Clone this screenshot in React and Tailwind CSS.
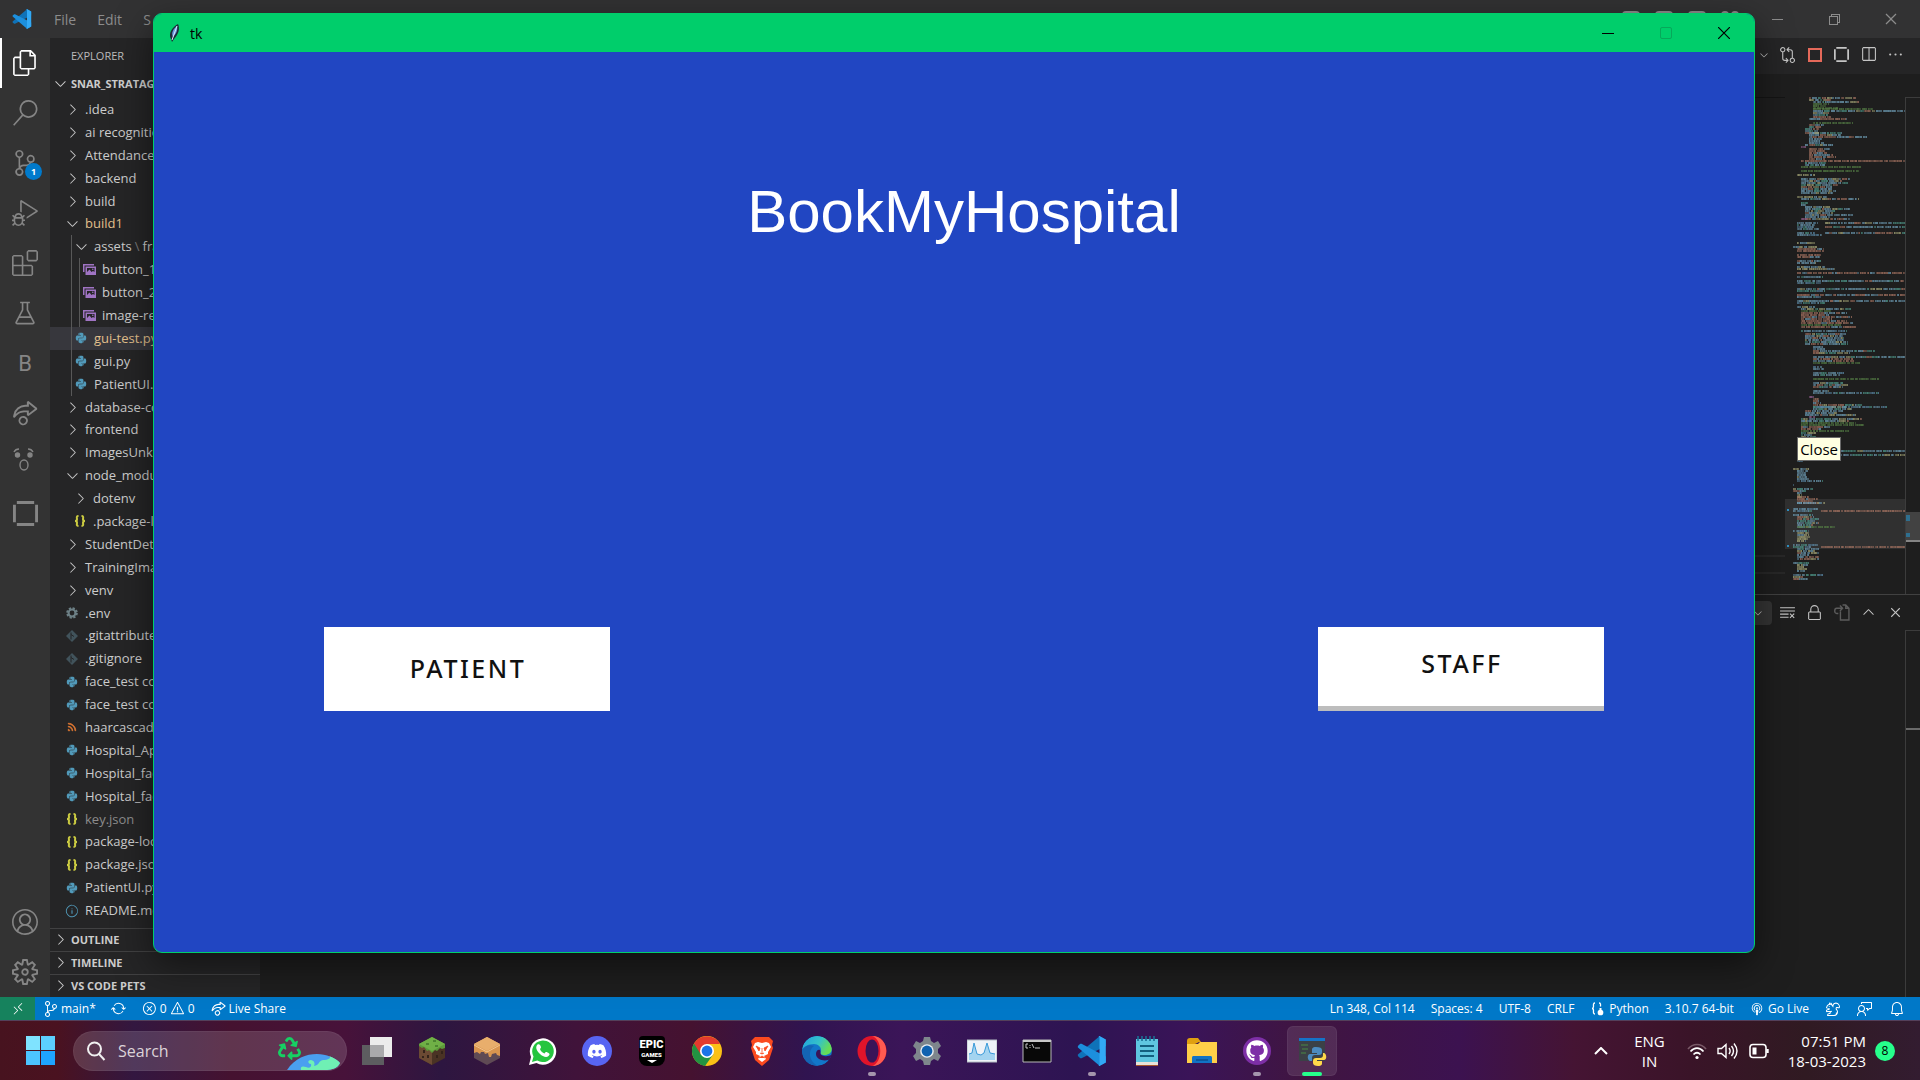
import React from "react";
import {
  VscFiles, VscSearch, VscSourceControl, VscDebugAlt, VscExtensions, VscBeaker, VscLiveShare,
  VscAccount, VscSettingsGear, VscChevronRight, VscChevronDown, VscChevronUp, VscGitCompare,
  VscSplitHorizontal, VscEllipsis, VscClearAll, VscLock, VscSync, VscError, VscWarning,
  VscBroadcast, VscFeedback, VscBell, VscRemote, VscChromeMinimize, VscChromeRestore,
  VscChromeClose, VscClose, VscRss, VscInfo, VscSquirrel,
} from "react-icons/vsc";
import { FaPython, FaDiscord, FaGithub, FaRecycle } from "react-icons/fa";

/* ---------- brand drawings ---------- */

function VsCodeLogo({ className }) {
  return (
    <svg viewBox="0 0 100 100" className={className} aria-hidden="true">
      <path d="M75 1 96 12v21L15 74h-4L3 67v-5z" fill="#0f72b8" />
      <path d="M3 38v-5l8-7h4l81 42v20L75 99z" fill="#1c8fdd" />
      <path d="M71 1 75 0l21 12v76L75 100l-4-1c3-1 4-3 4-6V7c0-3-1-5-4-6z" fill="#32a9f5" />
    </svg>
  );
}

function Feather() {
  return (
    <svg viewBox="0 0 16 20" className="h-5 w-4" aria-hidden="true">
      <path d="M12 1c2 4 1 10-4 15l-2 3-1-3C2 11 6 4 12 1z" fill="#1d2b3a" />
      <path d="M11 3c1 4-1 8-4 11C5 10 7 6 11 3z" fill="#6d9be0" />
      <path d="M11 3 6 17" stroke="#dbe8ff" strokeWidth="1" />
    </svg>
  );
}

function BracketSquare({ className }) {
  return (
    <svg viewBox="0 0 26 26" className={className} fill="currentColor" aria-hidden="true">
      <path d="M4 0h18v3H4zM4 23h18v3H4zM0 4h3v18H0zM23 4h3v18h-3z" />
    </svg>
  );
}

function PetsFace() {
  return (
    <svg viewBox="0 0 24 26" className="h-[26px] w-6" fill="none" stroke="currentColor" strokeWidth="1.4" aria-hidden="true">
      <path d="M1 5c1-2 3-3 5-3M15 2c3 0 4 1 5 3" />
      <circle cx="4.500" cy="8" r="2" fill="currentColor" />
      <circle cx="17" cy="8" r="2" fill="currentColor" />
      <ellipse cx="11" cy="18" rx="4" ry="5" />
    </svg>
  );
}

function ImageFileIcon() {
  return (
    <svg viewBox="0 0 13 11" className="h-[11px] w-[13px]" aria-hidden="true">
      <path d="M0 8V0h11v1.500H1.500V8z" fill="#a074c4" />
      <path d="M2.500 2.500H13V11H2.500z" fill="#a074c4" />
      <path d="M4 8V4h7.500v4L10 7 8.500 8 6.500 5.500z" fill="#252526" />
      <circle cx="9.800" cy="5.300" r=".8" fill="#a074c4" />
    </svg>
  );
}

function GitFileIcon() {
  return (
    <svg viewBox="0 0 12 12" className="h-3 w-3" aria-hidden="true">
      <path d="M6 0l6 6-6 6-6-6z" fill="#41535b" />
      <path d="M5 2.500v7M5 4.500l3 2" stroke="#252526" strokeWidth="1" fill="none" />
    </svg>
  );
}

function CogFileIcon() {
  return (
    <svg viewBox="0 0 14 14" className="size-3" aria-hidden="true">
      <circle cx="7" cy="7" r="5.600" fill="none" stroke="#6d8086" strokeWidth="2.400" strokeDasharray="2.600 1.800" />
      <circle cx="7" cy="7" r="4" fill="none" stroke="#6d8086" strokeWidth="2.400" />
    </svg>
  );
}

function BracesIcon() {
  return (
    <svg viewBox="0 0 12 12" className="size-3" fill="none" stroke="#cbcb41" strokeWidth="2" aria-hidden="true">
      <path d="M4.500 1C2 1 3 3 3 4.300S2.500 6 1 6c1.500 0 2 .5 2 1.700S2 11 4.500 11M7.500 1C10 1 9 3 9 4.300S9.500 6 11 6c-1.500 0-2 .5-2 1.700s1 3.300-1.500 3.300" />
    </svg>
  );
}

const icons = {
  py: <FaPython className="size-3 text-[#519aba]" />,
  img: <ImageFileIcon />,
  json: <BracesIcon />,
  git: <GitFileIcon />,
  env: <CogFileIcon />,
  xml: <VscRss className="size-3 text-[#e37933]" strokeWidth="1" />,
  md: <VscInfo className="size-[14px] text-[#519aba]" />,
  open: <VscChevronDown className="size-[17px] text-[#c5c5c5]" />,
  closed: <VscChevronRight className="size-[17px] text-[#c5c5c5]" />,
};

const tree = [
  ["closed", ".idea", 0],
  ["closed", "ai recognition", 0],
  ["closed", "Attendance", 0],
  ["closed", "backend", 0],
  ["closed", "build", 0],
  ["open", "build1", 0, "text-[#e2c08d]"],
  ["open", <>assets<span className="px-[3px] text-[#7a7a7a]">\</span>frame0</>, 1],
  ["img", "button_1.png", 2],
  ["img", "button_2.png", 2],
  ["img", "image-re.png", 2],
  ["py", "gui-test.py", 1, "text-[#e2c08d]"],
  ["py", "gui.py", 1],
  ["py", "PatientUI.py", 1],
  ["closed", "database-con", 0],
  ["closed", "frontend", 0],
  ["closed", "ImagesUnknown", 0],
  ["open", "node_modules", 0],
  ["closed", "dotenv", 3],
  ["json", ".package-lock.json", 3],
  ["closed", "StudentDetails", 0],
  ["closed", "TrainingImage", 0],
  ["closed", "venv", 0],
  ["env", ".env", 0],
  ["git", ".gitattributes", 0],
  ["git", ".gitignore", 0],
  ["py", "face_test copy.py", 0],
  ["py", "face_test copy 2.py", 0],
  ["xml", "haarcascade.xml", 0],
  ["py", "Hospital_App.py", 0],
  ["py", "Hospital_face.py", 0],
  ["py", "Hospital_face2.py", 0],
  ["json", "key.json", 0, "text-[#8c8c8c]"],
  ["json", "package-lock.json", 0],
  ["json", "package.json", 0],
  ["py", "PatientUI.py", 0],
  ["md", "README.md", 0],
  ["py", "", 0],
];

function TreeRow({ row }) {
  const [kind, name, level, color] = row;
  const active = name === "gui-test.py";
  return (
    <li className={"flex min-h-0 flex-1 items-stretch pl-[13px] " + (active ? "bg-[#37373d]" : "")}>
      {(level === 1 || level === 2) && <span className="ml-2 w-0 border-l border-[#585858]" />}
      {level === 2 && <span className="ml-[7px] w-0 border-l border-[#585858]" />}
      {level === 3 && <span className="w-2" />}
      <button type="button" className="flex items-center gap-1 whitespace-nowrap">
        <span className="flex w-[18px] justify-center">{icons[kind]}</span>
        <span className={color || "text-[#cccccc]"}>{name}</span>
      </button>
    </li>
  );
}

/* ---------- minimap ---------- */

const palettes = {
  m: ["#6f9fb8", "#6f9fb8", "#4f9a8c", "#a8a878", "#6f9fb8", "#a87462"],
  o: ["#a87462", "#a87462", "#6f9fb8", "#a87462"],
  s: ["#a87462"],
  g: ["#557f45"],
  p: ["#96608f"],
  y: ["#a8a878", "#6f9fb8", "#a8a878"],
  b: ["#6f9fb8", "#5a89a8", "#6f9fb8", "#4f9a8c"],
};

// [y, line count, indent, width, palette]
const codeBlocks = [
  [0, 1, 24, 48, "m"], [2, 1, 24, 22, "m"], [4, 1, 28, 46, "m"], [6, 3, 28, 26, "g"], [11, 1, 28, 60, "g"], [13, 1, 28, 92, "m"],
  [15, 3, 28, 22, "m"], [21, 1, 24, 38, "o"], [25, 1, 28, 40, "g"], [27, 2, 24, 18, "m"], [31, 3, 20, 24, "m"],
  [35, 2, 24, 34, "m"], [39, 1, 24, 58, "o"], [41, 3, 24, 22, "b"], [47, 1, 20, 28, "m"], [49, 1, 16, 5, "p"],
  [51, 6, 24, 30, "o"], [63, 1, 16, 104, "s"], [65, 2, 20, 24, "b"], [69, 1, 16, 60, "g"], [73, 1, 16, 58, "g"],
  [77, 1, 12, 18, "y"], [81, 8, 16, 54, "m"], [99, 1, 12, 30, "y"], [101, 1, 16, 58, "m"], [105, 2, 16, 8, "b"],
  [109, 7, 20, 50, "m"], [121, 1, 16, 6, "p"], [125, 4, 12, 28, "b"], [125, 1, 40, 80, "m"], [129, 1, 40, 80, "m"],
  [135, 2, 12, 30, "b"], [135, 1, 40, 80, "m"], [145, 1, 12, 18, "y"], [149, 1, 8, 24, "y"], [151, 2, 12, 30, "o"],
  [157, 2, 12, 28, "o"], [163, 2, 12, 38, "m"], [169, 2, 12, 40, "y"], [175, 1, 12, 108, "o"], [179, 1, 12, 26, "b"],
  [183, 1, 12, 108, "m"], [185, 1, 12, 24, "b"], [191, 1, 12, 108, "m"], [193, 1, 12, 28, "b"], [197, 1, 12, 108, "o"],
  [199, 1, 12, 24, "b"], [203, 1, 12, 108, "m"], [205, 1, 12, 28, "b"], [209, 1, 12, 18, "y"], [211, 1, 16, 50, "m"],
  [213, 1, 16, 30, "g"], [215, 6, 16, 54, "o"], [227, 1, 16, 40, "g"], [229, 1, 16, 56, "o"], [233, 1, 16, 46, "b"],
  [236, 6, 20, 50, "m"], [249, 2, 28, 16, "b"], [253, 2, 28, 66, "m"], [259, 1, 28, 92, "m"], [261, 2, 28, 50, "o"],
  [265, 1, 28, 48, "g"], [269, 2, 28, 18, "b"], [275, 2, 28, 36, "b"], [281, 1, 28, 66, "g"], [285, 3, 28, 46, "m"],
  [293, 1, 28, 16, "y"], [295, 1, 28, 66, "b"], [299, 1, 24, 5, "p"], [301, 3, 28, 12, "o"], [307, 3, 28, 50, "m"],
  [309, 1, 28, 74, "b"], [313, 3, 20, 62, "m"], [319, 1, 24, 6, "p"], [321, 2, 16, 62, "m"], [325, 2, 16, 66, "g"],
  [329, 2, 16, 40, "o"], [333, 1, 16, 48, "g"], [335, 3, 16, 22, "m"], [353, 1, 12, 108, "m"], [357, 1, 12, 108, "m"],
  [363, 1, 12, 6, "b"], [371, 1, 8, 16, "y"], [373, 5, 12, 16, "m"], [383, 1, 12, 26, "b"], [387, 1, 8, 1, "b"],
  [391, 2, 8, 26, "m"], [395, 3, 12, 7, "y"], [399, 4, 12, 22, "o"], [405, 1, 12, 28, "m"], [411, 2, 8, 28, "b"],
  [413, 1, 36, 84, "s"], [417, 1, 8, 20, "b"], [419, 6, 12, 22, "m"], [429, 1, 12, 38, "g"], [433, 1, 8, 16, "b"],
  [435, 5, 12, 13, "y"], [447, 2, 8, 28, "b"], [449, 1, 36, 84, "s"], [451, 6, 12, 24, "m"], [465, 1, 8, 16, "b"],
  [467, 4, 12, 13, "y"], [477, 1, 8, 30, "b"], [479, 2, 8, 18, "m"],
];

function buildSegments() {
  let seed = 7;
  const rnd = () => {
    seed = (seed * 16807) % 2147483647;
    return seed / 2147483647;
  };
  const out = [];
  codeBlocks.forEach(([y, n, x, w, p]) => {
    for (let i = 0; i < n; i++) {
      const end = x + Math.round(n === 1 ? w : w * (0.5 + 0.5 * rnd()));
      let cx = x;
      while (cx < end) {
        const len = Math.min(2 + Math.floor(rnd() * 6), end - cx);
        const colors = palettes[p];
        const color = colors[Math.floor(rnd() * colors.length)];
        for (let k = 0; k < len; k++) {
          out.push([cx + k, y + i * 2, 1, color, 0.4 + rnd() * 0.35]);
        }
        cx += len + (rnd() > 0.4 ? 1 : 0);
      }
    }
  });
  return out;
}
const segments = buildSegments();

function Minimap() {
  return (
    <svg viewBox="0 0 120 498" className="h-[498px] w-[120px] shrink-0" shapeRendering="crispEdges" aria-hidden="true">
      <rect x="0" y="402" width="120" height="50" fill="#303030" />
      {segments.map(([x, y, w, c, o], i) => (
        <rect key={i} x={x} y={y} width={w} height="2" fill={c} opacity={o} />
      ))}
      <rect x="2" y="412" width="2" height="2" fill="#2f8fc0" />
      <rect x="2" y="448" width="2" height="2" fill="#2f8fc0" />
    </svg>
  );
}

/* ---------- VS Code ---------- */

function ActivityBar() {
  const item = "flex h-[50px] w-full items-center justify-center";
  return (
    <nav aria-label="Activity bar" className="flex w-[50px] shrink-0 flex-col bg-[#333333] text-[#858585]">
      <button type="button" aria-label="Explorer" className={item + " border-l-2 border-white pr-[2px] text-white"}><VscFiles className="size-[26px]" /></button>
      <button type="button" aria-label="Search" className={item}><VscSearch className="size-[26px]" /></button>
      <button type="button" aria-label="Source control" className={item + " relative"}>
        <VscSourceControl className="size-[26px]" />
        <span className="absolute right-2 bottom-2 flex size-[17px] items-center justify-center rounded-full bg-[#007acc] text-[9px] font-bold text-white">1</span>
      </button>
      <button type="button" aria-label="Run and debug" className={item}><VscDebugAlt className="size-[26px]" /></button>
      <button type="button" aria-label="Extensions" className={item}><VscExtensions className="size-[26px]" /></button>
      <button type="button" aria-label="Testing" className={item}><VscBeaker className="size-[26px]" /></button>
      <button type="button" className={item + " font-['Roboto'] text-[22px]"}>B</button>
      <button type="button" aria-label="Live share" className={item}><VscLiveShare className="size-[26px]" /></button>
      <button type="button" aria-label="Pets" className={item + " pb-[6px]"}><PetsFace /></button>
      <button type="button" aria-label="Frames" className={item}><BracketSquare className="size-[25px]" /></button>
      <button type="button" aria-label="Account" className={item + " mt-auto"}><VscAccount className="size-[26px]" /></button>
      <button type="button" aria-label="Settings" className={item}><VscSettingsGear className="size-[26px]" /></button>
    </nav>
  );
}

function SideBar() {
  return (
    <aside className="flex w-[210px] shrink-0 flex-col overflow-hidden bg-[#252526] text-[13px] leading-none text-[#cccccc]">
      <h2 className="flex h-[34px] shrink-0 items-center pl-[21px] text-[11px] text-[#bbbbbb]">EXPLORER</h2>
      <button type="button" className="mb-1 flex h-[22px] shrink-0 items-center gap-[2px] pl-[2px] text-[11px] font-bold whitespace-nowrap">
        <VscChevronDown className="size-[17px]" />SNAR_STRATAGEM
      </button>
      <div className="min-h-0 flex-1 overflow-hidden">
        <ul className="flex h-[847px] flex-col">
          {tree.map((row, i) => <TreeRow key={i} row={row} />)}
        </ul>
      </div>
      {["OUTLINE", "TIMELINE", "VS CODE PETS"].map((t) => (
        <button key={t} type="button" className="flex h-[23px] shrink-0 items-center gap-[2px] border-t border-[#414142] pb-[2px] pl-[2px] text-[11px] font-bold">
          <VscChevronRight className="size-[17px]" />{t}
        </button>
      ))}
    </aside>
  );
}

function Editor() {
  const act = "flex w-[27px] items-center justify-center";
  return (
    <main className="flex min-w-0 flex-1 flex-col bg-[#1e1e1e] text-[#c5c5c5]">
      <div className="flex h-9 shrink-0 items-center justify-end bg-[#252526] pr-[11px] pb-[3px]">
        <button type="button" aria-label="Run menu" className="flex w-5 justify-center"><VscChevronDown className="size-3" /></button>
        <button type="button" aria-label="Compare" className={act}><VscGitCompare className="size-[17px]" /></button>
        <button type="button" aria-label="Stop" className={act}><span className="size-[14px] border-2 border-[#e5695a]" /></button>
        <button type="button" aria-label="Frame" className={act}><BracketSquare className="size-[15px]" /></button>
        <button type="button" aria-label="Split editor" className={act}><VscSplitHorizontal className="size-[17px]" /></button>
        <button type="button" aria-label="More" className={act}><VscEllipsis className="size-[17px]" /></button>
      </div>
      <div className="h-[23px] shrink-0" />
      <div className="flex min-h-0 flex-1">
        <div className="flex min-w-0 flex-1 flex-col border-t border-[#141414]">
          <div className="mt-[457px] h-[19px] border-y-2 border-[#282828]" />
        </div>
        <Minimap />
        <div className="flex w-[15px] flex-col border-t border-l border-[#3c3c3c]">
          <div className="mt-[414px] flex h-[30px] flex-col justify-between border-b-2 border-[#858585] bg-[#424242] py-[3px]">
            <span className="h-[6px] w-1 bg-[#2f6f8f]" />
            <span className="h-1 w-1 bg-[#2f6f8f]" />
          </div>
        </div>
      </div>
      <section aria-label="Panel" className="flex h-[403px] shrink-0 flex-col border-t border-[#414141]">
        <div className="flex h-[35px] items-center justify-end pr-[11px]">
          <button type="button" aria-label="Profile menu" className="mr-[2px] flex h-6 w-7 items-center justify-center rounded-sm bg-[#343434]"><VscChevronDown className="size-3" /></button>
          <button type="button" aria-label="Clear" className={act}><VscClearAll className="size-[17px]" /></button>
          <button type="button" aria-label="Lock" className={act}><VscLock className="size-[17px]" /></button>
          <button type="button" aria-label="Open log" className={act + " text-[#5c5c5c]"}>
            <svg viewBox="0 0 16 16" className="size-[17px]" fill="none" stroke="currentColor" strokeWidth="1.300" aria-hidden="true">
              <path d="M7 7v8h8V4l-3-3H9M5 9H3.500C1 9 1 4 3.500 4H9M6.500 1.500 9 4 6.500 6.500M12 1v3h3" />
            </svg>
          </button>
          <button type="button" aria-label="Maximize panel" className={act}><VscChevronUp className="size-[17px]" /></button>
          <button type="button" aria-label="Close panel" className={act}><VscClose className="size-[17px]" /></button>
        </div>
        <div className="flex flex-1 justify-end">
          <div className="w-[15px] border-t border-l border-[#3c3c3c]"><div className="mt-[97px] h-[2px] bg-[#6a6a6a]" /></div>
        </div>
      </section>
    </main>
  );
}

function StatusBar() {
  const b = "flex items-center";
  return (
    <footer className="flex h-[23px] shrink-0 items-center bg-[#0078c8] text-[12px] whitespace-nowrap text-white">
      <button type="button" aria-label="Remote" className="flex h-full w-[35px] items-center justify-center bg-[#16825d]"><VscRemote className="size-[14px]" /></button>
      <button type="button" className={b + " ml-2 gap-[2px]"}><VscSourceControl className="size-4" />main*</button>
      <button type="button" aria-label="Sync" className="ml-[15px]"><VscSync className="size-[15px]" /></button>
      <button type="button" className={b + " ml-4 gap-[3px]"}><VscError className="size-[15px]" />0<VscWarning className="size-[15px]" />0</button>
      <button type="button" className={b + " ml-4 gap-[3px]"}><VscLiveShare className="size-[15px]" />Live Share</button>
      <div className="ml-auto flex items-center gap-4 pr-[15px]">
        <button type="button">Ln 348, Col 114</button>
        <button type="button">Spaces: 4</button>
        <button type="button">UTF-8</button>
        <button type="button">CRLF</button>
        <button type="button" className={b + " gap-[5px]"}>
          <svg viewBox="0 0 14 14" className="size-[14px]" fill="none" stroke="currentColor" strokeWidth="1.300" aria-hidden="true">
            <path d="M5 1C3 1 3.500 3 3.500 4.500S3 6.500 2 6.500c1 0 1.500.5 1.500 2S3 12 5 12M9 1c2 0 1.500 2 1.500 3.500" />
            <circle cx="10.500" cy="10.500" r="2.200" fill="currentColor" /><path d="M10.500 6v4" strokeWidth="2" />
          </svg>
          Python
        </button>
        <button type="button">3.10.7 64-bit</button>
        <button type="button" className={b + " gap-1"}><VscBroadcast className="size-[14px]" />Go Live</button>
        <button type="button" aria-label="Squirrel"><VscSquirrel className="size-4" /></button>
        <button type="button" aria-label="Feedback"><VscFeedback className="size-4" /></button>
        <button type="button" aria-label="Notifications"><VscBell className="size-4" /></button>
      </div>
    </footer>
  );
}

function CodeWindow() {
  return (
    <div className="flex min-h-0 flex-1 flex-col">
      <header className="flex h-[38px] shrink-0 items-center bg-[#323233] text-[14px] text-[#8c8c8c]">
        <VsCodeLogo className="ml-3 size-5" />
        <nav aria-label="Menu" className="ml-[22px] flex gap-[21px]">
          <button type="button">File</button>
          <button type="button">Edit</button>
          <button type="button" aria-label="Selection" className="w-2 overflow-hidden">S</button>
        </nav>
        <div className="mr-[9px] ml-auto flex gap-[15px]" aria-hidden="true">
          <span className="h-4 w-[18px] rounded-sm border-2 border-l-[7px] border-[#8c8c8c]" />
          <span className="h-4 w-[18px] rounded-sm border-2 border-[#8c8c8c]" />
          <span className="h-4 w-[18px] rounded-sm border-2 border-r-[7px] border-[#8c8c8c]" />
          <span className="flex w-[18px] gap-[2px]"><i className="h-4 flex-1 rounded-sm border-2 border-[#8c8c8c]" /><i className="h-4 flex-1 rounded-sm border-2 border-[#8c8c8c]" /></span>
        </div>
        <div className="flex pr-px">
          <button type="button" aria-label="Minimize" className="flex w-[57px] justify-center"><VscChromeMinimize className="size-4" /></button>
          <button type="button" aria-label="Restore" className="flex w-[57px] justify-center"><VscChromeRestore className="size-4" /></button>
          <button type="button" aria-label="Close" className="flex w-[57px] justify-center"><VscChromeClose className="size-4" /></button>
        </div>
      </header>
      <div className="flex min-h-0 flex-1">
        <ActivityBar />
        <SideBar />
        <Editor />
      </div>
      <StatusBar />
    </div>
  );
}

/* ---------- tk window ---------- */

function TkWindow() {
  return (
    <section aria-label="tk" className="absolute top-[13px] right-[165px] bottom-[127px] left-[153px] flex flex-col overflow-hidden rounded-[9px] border border-[#00ce6b] bg-[#2146c2] shadow-[0_12px_36px_rgba(0,0,0,0.5)]">
      <header className="flex h-[38px] shrink-0 items-center bg-[#00ce6b] pr-px text-[14px] text-black">
        <span className="ml-3"><Feather /></span>
        <span className="ml-2">tk</span>
        <button type="button" aria-label="Minimize" className="ml-auto flex h-full w-[58px] items-center justify-center"><span className="h-px w-3 bg-black" /></button>
        <button type="button" aria-label="Maximize" disabled className="flex h-full w-[58px] items-center justify-center"><span className="size-3 rounded-[2px] border border-[#07a85a]" /></button>
        <button type="button" aria-label="Close" className="flex h-full w-[58px] items-center justify-center">
          <svg viewBox="0 0 12 12" className="size-3" aria-hidden="true"><path d="M0 0l12 12M12 0 0 12" stroke="#000" strokeWidth="1.200" /></svg>
        </button>
      </header>
      <div className="flex flex-1 flex-col pt-[125px] pr-[150px] pl-[170px]">
        <h1 className="text-center font-['Liberation_Sans',sans-serif] text-[60px] leading-[70px] text-white">BookMyHospital</h1>
        <div className="mt-[380px] flex justify-between font-['Noto_Sans',sans-serif] text-[25px] font-medium tracking-widest text-[#111111]">
          <button type="button" className="h-[84px] w-[286px] bg-white pl-[2px]">PATIENT</button>
          <button type="button" className="h-[84px] w-[286px] border-b-[5px] border-[#bdbdbd] bg-white pb-[6px] pl-[2px]">STAFF</button>
        </div>
      </div>
    </section>
  );
}

/* ---------- taskbar ---------- */

const I = "size-[30px]";

const taskIcons = [
  ["Task view", <svg viewBox="0 0 30 30" className={I}><path d="M8 1h22v20H8z" fill="#ececec" /><path d="M0 9h22v20H0z" fill="#5d5d60" /><path d="M8 9h14v12H8z" fill="#a9a9ab" /></svg>],
  ["Minecraft", <svg viewBox="0 0 30 30" className={I}><path d="M15 1 28 8v14L15 29 2 22V8z" fill="#4a3324" /><path d="M15 15v14L2 22V8z" fill="#6b4a33" /><path d="M15 1 28 8v4l-3 1-2-1-3 3-2-1-3 3-3-3-2 1-3-4-2 1-3-2V8z" fill="#5c9a3a" /><path d="M15 1 28 8l-13 7L2 8z" fill="#6fb046" /><path d="M6 14h2v3H6zM10 19h2v3h-2zM5 20h2v2H5zM19 19h2v3h-2zM24 15h2v3h-2z" fill="#33231a" /><path d="M9 7h3v2H9zM16 4h3v2h-3zM18 9h3v2h-3z" fill="#4c8530" /></svg>],
  ["Dungeons", <svg viewBox="0 0 30 30" className={I}><path d="M15 1 28 8v14L15 29 2 22V8z" fill="#5f4a54" /><path d="M15 1 28 8v12l-3-1-1-2-4 1-1 3-2 0-1-4-3 1-1-2-3 0-1 2-3-2-3 1V8z" fill="#d9954f" /><path d="M15 1 28 8l-13 7L2 8z" fill="#e8ae6c" /><path d="M2 9l13 7 13-7" stroke="#f2c48d" fill="none" /></svg>],
  ["WhatsApp", <svg viewBox="0 0 30 30" className={I}><path d="M2 29l2-8A13.200 13.200 0 1 1 9.500 27z" fill="#fff" /><path d="M5 26l1.500-5.500A10.800 10.800 0 1 1 10.300 24.500z" fill="#25c53f" /><path d="M10.500 8.500c-3 3 0 7 2.500 9.500s6.500 4 8.500 2 1-2.500-1-3.500-2 0-3 1c-2-.5-4-2.500-4.500-4.500 1-1 1.200-1.500.7-2.800s-1.200-2.700-3.200-1.700z" fill="#fff" /></svg>],
  ["Discord", <span className="flex size-[30px] items-center justify-center rounded-full bg-[#5865f2]"><FaDiscord className="size-5 text-white" /></span>],
  ["Epic Games", <span className="flex h-[30px] w-[26px] flex-col items-center rounded-t-sm rounded-b-lg bg-black pt-[3px] font-['Roboto',sans-serif] font-black text-white"><b className="text-[11px] leading-[12px]">EPIC</b><b className="text-[6px] leading-[7px]">GAMES</b><svg viewBox="0 0 10 3" className="mt-[2px] h-[3px] w-[10px]"><path d="M0 0h10L5 3z" fill="#fff" /></svg></span>],
  ["Chrome", <svg viewBox="0 0 30 30" className={I}><circle cx="15" cy="15" r="15" fill="#fbc116" /><path d="M15 15 2 7.500A15 15 0 0 0 13 29.900L21.500 18z" fill="#229342" /><path d="M2 7.500A15 15 0 0 1 28 8H15L8.900 18.500z" fill="#e33b2e" /><circle cx="15" cy="15" r="7" fill="#fff" /><circle cx="15" cy="15" r="5.400" fill="#1a73e8" /></svg>],
  ["Brave", <svg viewBox="0 0 30 30" className={I}><path d="M8 1h14l4 4-1 4 1 3-4 12-7 6-7-6L4 12l1-3-1-4z" fill="#fb4a1f" /><path d="M8 7l3-1 4 1 4-1 3 1 2 4-3 5 0 2-4 2 2 3-4 3-4-3 2-3-4-2 0-2-3-5z" fill="#fff" /><path d="M9 10l4 2-1 3zM21 10l-4 2 1 3zM13 17l2 1 2-1M15 12v5M12 22l3-2 3 2" fill="#fb4a1f" stroke="#fb4a1f" strokeWidth=".8" /></svg>],
  ["Edge", <svg viewBox="0 0 30 30" className={I}><defs><linearGradient id="eg" x1="0" y1="0" x2="1" y2=".4"><stop offset="0" stopColor="#1f9fe0" /><stop offset=".6" stopColor="#35c2c8" /><stop offset="1" stopColor="#66dd55" /></linearGradient><clipPath id="ec"><circle cx="15" cy="15" r="15" /></clipPath></defs><g clipPath="url(#ec)"><circle cx="15" cy="15" r="15" fill="#1277c9" /><path d="M0 14C1 5 8 0 15 0c9 0 15 6 15 12 0 5-4 7-7 7-4 0-5-1-4-3 1-5-3-8-7-8C6 8 1 11 0 14z" fill="url(#eg)" /><path d="M12 10c-5 3-7 14 4 20C6 30 0 24 0 15c2-5 8-7 12-5z" fill="#1464b4" /><path d="M18 14c1 2-1 5 4 6 3 .5 6 0 9-2l-2 5c-6 3-15 1-15-5 0-3 2-5 4-4z" fill="#3a1458" /></g></svg>],
  ["Opera", <svg viewBox="0 0 30 30" className={I}><ellipse cx="15" cy="15" rx="14.500" ry="15" fill="#e0142a" /><path d="M15 0c19 0 19 30 0 30 11-3 11-27 0-30z" fill="#ff5b50" /><ellipse cx="15" cy="15" rx="6.500" ry="11.500" fill="#3a1458" /></svg>],
  ["Settings", <svg viewBox="0 0 30 30" className={I}><path d="M12 1h6l1 4 3 2 4-2 3 5-3 3v4l3 3-3 5-4-2-3 2-1 4h-6l-1-4-3-2-4 2-3-5 3-3v-4l-3-3 3-5 4 2 3-2z" fill="#7e868c" /><circle cx="15" cy="15" r="6.800" fill="#e9eef2" /><circle cx="15" cy="15" r="5.400" fill="#0f62b0" /></svg>],
  ["Resource monitor", <svg viewBox="0 0 30 30" className={I}><path d="M0 4h30v22H0z" fill="#eef3f8" stroke="#b4bcc4" /><path d="M2 24V18l3-1 2-10 3 11 4 1 3-2 3-10 3 10 5 1v6z" fill="#a3d4f0" /><path d="M2 18l3-1 2-10 3 11 4 1 3-2 3-10 3 10 5 1" stroke="#3a9ad9" fill="none" /></svg>],
  ["Terminal", <svg viewBox="0 0 30 30" className={I}><path d="M1 4h28v22H1z" fill="#080808" stroke="#b8b8b8" /><path d="M1 4h28v2H1z" fill="#c9c9c9" /><path d="M4 8v4M4 8h2M4 12h2M8 9v1M8 11v1M10 8l2 4M13 12h5" stroke="#c8c8c8" fill="none" /></svg>],
  ["Visual Studio Code", <VsCodeLogo className={I} />],
  ["Notepad", <svg viewBox="0 0 30 30" className={I}><path d="M4 3h22v24H4z" fill="#5fc6e0" /><path d="M4 26h22v3H4z" fill="#e8e2d8" /><path d="M4 29h22v1H4z" fill="#a8562b" /><path d="M6 0v5M10 0v5M14 0v5M18 0v5M22 0v5" stroke="#1b6f94" strokeWidth="1.600" /><path d="M8 10h14M8 15h14M8 20h14" stroke="#13607f" strokeWidth="2" /></svg>],
  ["File Explorer", <svg viewBox="0 0 30 30" className={I}><path d="M0 5c0-2 1-3 3-3h8l3 4h-2L0 12z" fill="#e0a010" /><path d="M0 8h11l2-2h17v21H0z" fill="#ffcf48" /><path d="M5 27v-5c0-2 1-2 2-2h16c1 0 2 0 2 2v5z" fill="#1273c4" /><path d="M9 24h12" stroke="#0a4f90" strokeWidth="1.500" /></svg>],
  ["GitHub Desktop", <span className="flex size-7 items-center justify-center rounded-full bg-[#7d2fa6]"><FaGithub className="size-[22px] text-white" /></span>],
  ["Python", <svg viewBox="0 0 30 30" className={I}><path d="M2 2h26v23H2z" fill="#3b4146" /><path d="M2 2h26v3H2z" fill="#1673c8" /><path d="M4 9h7M5 13h6M4 17h5" stroke="#4a8a45" strokeWidth="1.200" /><path d="M19 11c-4 0-4 2-4 3v3h5v1h-7c-3 0-3 6 0 7h2v-3c0-2 1-3 3-3h4c2 0 3-1 3-3v-2c0-2-2-3-6-3z" fill="#4b8bc0" /><path d="M21 30c4 0 4-2 4-3v-2h-5v-1h7c3 0 3-6 0-7h-1v2c0 2-1 3-3 3h-4c-2 0-3 1-3 3v2c0 2 2 3 5 3z" fill="#ffd94a" /></svg>],
];

function Taskbar() {
  return (
    <footer className="flex h-[60px] shrink-0 items-center border-t border-[#54405a] bg-[linear-gradient(90deg,#47131f_0%,#4a1220_3%,#331740_7%,#451230_12%,#47123a_18%,#2d1640_23%,#40133a_30%,#451230_36%,#301450_42%,#3b1558_47%,#2d1452_56%,#3a1458_62%,#401540_68%,#3c1250_76%,#451433_82%,#3a1428_88%,#301a22_94%,#331c30_100%)] text-white">
      <button type="button" aria-label="Start" className="ml-[26px] grid size-[29px] grid-cols-2 gap-px">
        <span className="bg-[#7fe3ff]" /><span className="bg-[#5ccfff]" /><span className="bg-[#4cc4ff]" /><span className="bg-[#1ea4ff]" />
      </button>
      <label className="ml-[18px] flex h-10 w-[274px] items-center overflow-hidden rounded-full border border-white/5 bg-white/15 pr-[5px] pl-3">
        <svg viewBox="0 0 20 20" className="size-5 shrink-0" fill="none" stroke="#f0f0f0" strokeWidth="2" aria-hidden="true"><circle cx="8.500" cy="8" r="6.500" /><path d="M13 13l5.500 6" /></svg>
        <input type="text" aria-label="Search" placeholder="Search" className="ml-3 w-36 bg-transparent text-[16px] outline-none placeholder:text-[#dcd3d8]" />
        <svg viewBox="0 0 64 38" className="ml-auto h-[38px] w-16 shrink-0" aria-hidden="true">
          <path d="M10 38C18 26 29 22 40 22c9 0 19 4 23 9-2 4-6 7-9 7z" fill="#4a9ff0" />
          <path d="M52 24c5 2 9 4 11 7-2 4-6 7-9 7H24c-1-4 2-4 5-3 3 2 6 0 5-3-3 0-4-4 0-4 4 1 4 4 3 6 6-1 4-5 9-6 5 0 9-2 6-4z" fill="#6ff0b4" />
          <FaRecycle x="1" y="5" size="23" color="#16cf63" />
        </svg>
      </label>
      <ul className="ml-[2px] flex items-center">
        {taskIcons.map(([name, icon]) => {
          const active = name === "Python";
          const running = name === "Opera" || name === "Visual Studio Code" || name === "GitHub Desktop";
          return (
            <li key={name} className="flex w-[55px] justify-center">
              <button type="button" aria-label={name} className={"relative flex h-[50px] w-[50px] items-center justify-center rounded-md " + (active ? "border border-white/5 bg-white/10" : "")}>
                {icon}
                {active && <span className="absolute -bottom-px h-1 w-5 rounded-full bg-[#26ff8c]" />}
                {running && <span className="absolute bottom-0 h-1 w-2 rounded-full bg-[#a596ad]" />}
              </button>
            </li>
          );
        })}
      </ul>
      <div className="ml-auto flex items-center pr-[25px] text-[15px] leading-5">
        <button type="button" aria-label="Hidden icons" className="mr-[26px]">
          <svg viewBox="0 0 14 8" className="h-2 w-[14px]" fill="none" stroke="#fff" strokeWidth="2"><path d="M1 7l6-6 6 6" /></svg>
        </button>
        <button type="button" className="mr-[22px] text-center">ENG<br />IN</button>
        <button type="button" aria-label="Network, volume and battery" className="mr-[19px] flex items-center gap-[10px]">
          <svg viewBox="0 0 20 18" className="h-[18px] w-5" fill="none" stroke="#fff" strokeWidth="1.700"><path d="M1 7c5-6 13-6 18 0" stroke="#7a5a68" /><path d="M3.500 9.500c4-4.500 9-4.500 13 0M6.500 12.500c2.500-2.500 4.500-2.500 7 0" /><circle cx="10" cy="15.500" r="1.600" fill="#fff" stroke="none" /></svg>
          <svg viewBox="0 0 22 18" className="h-[18px] w-[22px]" fill="none" stroke="#fff" strokeWidth="1.400"><path d="M1 6.500v5h3.500L9 15.500v-13L4.500 6.500zM12 6c1.500 2 1.500 4 0 6M14.500 4c2.800 3.500 2.800 6.500 0 10M17 1.500c4 5 4 10 0 15" /></svg>
          <svg viewBox="0 0 20 16" className="h-4 w-5" fill="none" stroke="#fff" strokeWidth="1.600"><rect x="1" y="1.500" width="16" height="13" rx="3" /><path d="M3.500 4.500h4v7h-4z" fill="#fff" stroke="none" /><path d="M18.500 6v4" strokeWidth="2.400" /></svg>
        </button>
        <button type="button" className="mr-[9px] text-right">07:51 PM<br />18-03-2023</button>
        <span className="flex size-5 items-center justify-center rounded-full bg-[#26ff8c] text-[12px] text-black">8</span>
      </div>
    </footer>
  );
}

export default function App() {
  return (
    <div className="relative flex h-screen w-full flex-col overflow-hidden bg-[#1e1e1e] font-['Open_Sans','Noto_Sans',sans-serif]">
      <CodeWindow />
      <Taskbar />
      <TkWindow />
      <div role="tooltip" className="absolute top-[437px] right-[79px] border border-[#6a6a6a] bg-[#ffffe1] px-[2px] text-[15px] leading-[22px] text-black">Close</div>
    </div>
  );
}
